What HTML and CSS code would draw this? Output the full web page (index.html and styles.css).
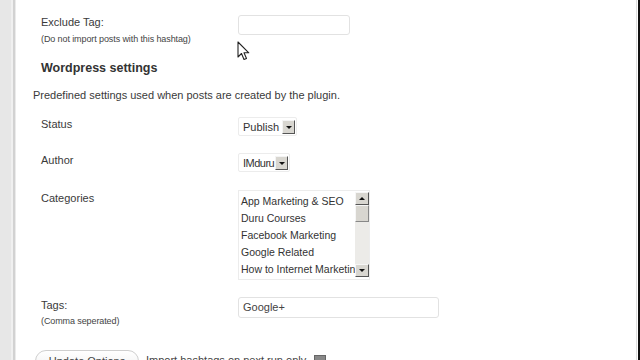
FILE: index.html
```html
<!DOCTYPE html>
<html lang="en">
<head>
  <meta charset="UTF-8">
  <title>Plugin Settings</title>
  <link rel="stylesheet" href="styles.css">
</head>
<body>
  <div id="page">
    <div class="gutter"></div>
    <div class="gutter-line"></div>

    <div id="main">
      <div class="row row-exclude">
        <div class="label">
          <p>Exclude Tag:</p>
          <p class="note">(Do not import posts with this hashtag)</p>
        </div>
        <div class="field">
          <span class="input input-short"></span>
        </div>
      </div>

      <h3 class="heading">Wordpress settings</h3>
      <p class="intro">Predefined settings used when posts are created by the plugin.</p>

      <div class="row row-status">
        <div class="label"><p>Status</p></div>
        <div class="field">
          <span class="select"><span class="select-text">Publish</span><span class="arrow"></span></span>
        </div>
      </div>

      <div class="row row-author">
        <div class="label"><p>Author</p></div>
        <div class="field">
          <span class="select"><span class="select-text narrow">IMduru</span><span class="arrow"></span></span>
        </div>
      </div>

      <div class="row row-cats">
        <div class="label label-cats"><p>Categories</p></div>
        <div class="field">
          <div class="listbox">
            <ul class="list">
              <li>App Marketing &amp; SEO</li>
              <li>Duru Courses</li>
              <li>Facebook Marketing</li>
              <li>Google Related</li>
              <li>How to Internet Marketing</li>
            </ul>
            <div class="scrollbar">
              <span class="sb-btn sb-up"></span>
              <span class="sb-thumb"></span>
              <span class="sb-track"></span>
              <span class="sb-btn sb-down"></span>
            </div>
          </div>
        </div>
      </div>

      <div class="row row-tags">
        <div class="label label-tags">
          <p>Tags:</p>
          <p class="note">(Comma seperated)</p>
        </div>
        <div class="field">
          <span class="input input-long">Google+</span>
        </div>
      </div>

      <div class="actions">
        <span class="button">Update Options</span>
        <span class="action-text">Import hashtags on next run only</span>
        <span class="checkbox"></span>
      </div>

      <!-- mouse pointer in the capture -->
      <svg class="cursor" width="13" height="20" viewBox="0 0 13 20">
        <path d="M1 1 L1 16 L4.5 12.5 L7 18.5 L9.5 17.5 L7 11.8 L11.8 11.8 Z" fill="#fff" stroke="#222" stroke-width="1.1" stroke-linejoin="round"/>
      </svg>
    </div>

    <div class="edge-line"></div>
    <div class="edge"></div>
  </div>
</body>
</html>
```

FILE: styles.css
```css
*{
  margin: 0;
  padding: 0;
}
ul{
  list-style: none;
}
body{
  font-family: "Liberation Sans", Arial, sans-serif;
  font-size: 11px;
  color: #3a3a3a;
  background: #fff;
}

#page{
  display: flex;
  width: 640px;
  height: 360px;
  overflow: hidden;
}

.gutter{
  width: 11px;
  background: #e7e7e7;
  border-right: 2px solid #f0f0f0;
}
.gutter-line{
  width: 2px;
  background: #d2d2d2;
  border-right: 1px solid #ebebeb;
}
.edge-line{
  width: 1px;
  background: #dedede;
  margin-right: 1px;
}
.edge{
  width: 2px;
  background: #111;
}

#main{
  flex: 1;
  position: relative;
}

.row{
  display: grid;
  grid-template-columns: 197px auto;
  padding-left: 25px;
}
.label p{
  line-height: 13px;
}
.label .note{
  font-size: 9px;
  line-height: 10px;
  margin-top: 5px;
  color: #444;
  letter-spacing: -0.1px;
}

.row-exclude{
  margin-top: 15px;
}
.row-exclude .label{
  padding-top: 1px;
}

.input{
  display: block;
  height: 21px;
  box-sizing: border-box;
  border: 1px solid #e2e2e2;
  border-radius: 3px;
  padding: 3px 4px;
  line-height: 13px;
  color: #444;
}
.input-short{
  width: 112px;
  height: 20px;
}
.input-long{
  width: 201px;
}

.heading{
  margin: 16px 0 0 25px;
  font-size: 12.5px;
  line-height: 16px;
  font-weight: bold;
  color: #333;
}
.intro{
  margin: 13px 0 0 17px;
  line-height: 13px;
}

.row-status{
  margin-top: 15px;
}
.row-author{
  margin-top: 17px;
}
.row-status .label,
.row-author .label{
  padding-top: 1px;
}

.select{
  display: inline-flex;
  align-items: center;
  height: 19px;
  box-sizing: border-box;
  border: 1px solid #ececec;
  border-radius: 2px;
  padding: 0 1px 0 4px;
  color: #333;
}
.select-text{
  font-size: 11px;
  margin-right: 3px;
}
.select-text.narrow{
  letter-spacing: -0.5px;
  margin-right: 1px;
}
.arrow{
  position: relative;
  width: 13px;
  height: 14px;
  box-sizing: border-box;
  background: #d8d6d0;
  border-top: 1px solid #f4f4f4;
  border-left: 1px solid #f4f4f4;
  border-right: 1px solid #555;
  border-bottom: 1px solid #555;
}
.arrow::after{
  content: '';
  position: absolute;
  left: 3px;
  top: 5px;
  border-left: 3px solid transparent;
  border-right: 3px solid transparent;
  border-top: 3px solid #111;
}

.row-cats{
  margin-top: 18px;
}
.label-cats{
  padding-top: 2px;
}
.listbox{
  display: flex;
  width: 132px;
  height: 90px;
  box-sizing: border-box;
  border: 1px solid #ececec;
  overflow: hidden;
}
.list{
  flex: 1;
  overflow: hidden;
  padding: 2px 0 0 2px;
}
.list li{
  font-size: 10.5px;
  line-height: 17px;
  white-space: nowrap;
  color: #333;
}
.scrollbar{
  display: flex;
  flex-direction: column;
  width: 14px;
  padding: 1px 0 2px;
  background: #fff;
}
.sb-btn,
.sb-thumb{
  position: relative;
  display: block;
  height: 13px;
  box-sizing: border-box;
  background: #d8d6d0;
  border-top: 1px solid #f6f6f6;
  border-left: 1px solid #f6f6f6;
  border-right: 1px solid #555;
  border-bottom: 1px solid #555;
}
.sb-thumb{
  height: 17px;
  border-right-color: #888;
  border-bottom-color: #888;
}
.sb-track{
  flex: 1;
  background: #ecebe8;
}
.sb-up::after,
.sb-down::after{
  content: '';
  position: absolute;
  left: 3px;
  top: 4px;
  border-left: 3px solid transparent;
  border-right: 3px solid transparent;
}
.sb-up::after{
  border-bottom: 3px solid #111;
}
.sb-down::after{
  border-top: 3px solid #111;
}

.row-tags{
  margin-top: 17px;
}
.label-tags{
  padding-top: 2px;
}
.label-tags .note{
  margin-top: 4px;
}

.actions{
  display: flex;
  align-items: flex-start;
  margin: 24px 0 0 19px;
}
.button{
  display: block;
  width: 104px;
  height: 24px;
  box-sizing: border-box;
  border: 1px solid #cfcfcf;
  border-radius: 11px;
  background: linear-gradient(#fff, #eeeeee);
  text-align: center;
  line-height: 20px;
  color: #444;
}
.action-text{
  margin: 4px 0 0 7px;
  color: #444;
}
.checkbox{
  width: 10px;
  height: 10px;
  margin: 5px 0 0 8px;
  border: 1px solid #666;
  background: #888;
}

.cursor{
  position: absolute;
  left: 221px;
  top: 41px;
}
```
